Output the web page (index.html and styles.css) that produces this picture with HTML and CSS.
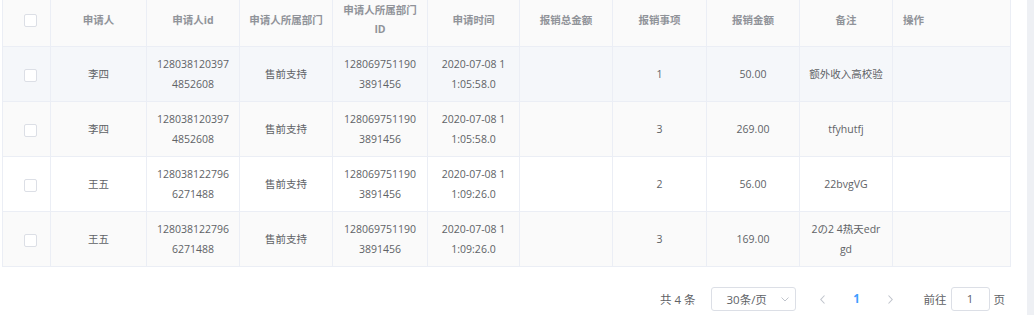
FILE: index.html
```html
<!DOCTYPE html>
<html lang="zh-CN">
<head>
<meta charset="utf-8">
<title>报销列表</title>
<link rel="stylesheet" href="styles.css">
</head>
<body>
<div class="page">
  <div class="main">
    <table class="grid">
      <colgroup>
        <col class="c-sel"><col class="c-96"><col class="c-93"><col class="c-93"><col class="c-95"><col class="c-92"><col class="c-93"><col class="c-94"><col class="c-93"><col class="c-93"><col class="c-op">
      </colgroup>
      <thead>
        <tr>
          <th class="sel"><span class="checkbox"></span></th>
          <th>申请人</th>
          <th>申请人id</th>
          <th>申请人所属部门</th>
          <th>申请人所属部门<br>ID</th>
          <th>申请时间</th>
          <th>报销总金额</th>
          <th>报销事项</th>
          <th>报销金额</th>
          <th>备注</th>
          <th class="left">操作</th>
        </tr>
      </thead>
      <tbody>
        <tr class="hover">
          <td class="sel"><span class="checkbox"></span></td>
          <td>李四</td>
          <td>128038120397<br>4852608</td>
          <td>售前支持</td>
          <td>128069751190<br>3891456</td>
          <td>2020-07-08 1<br>1:05:58.0</td>
          <td></td>
          <td>1</td>
          <td>50.00</td>
          <td>额外收入高校验</td>
          <td></td>
        </tr>
        <tr class="stripe">
          <td class="sel"><span class="checkbox"></span></td>
          <td>李四</td>
          <td>128038120397<br>4852608</td>
          <td>售前支持</td>
          <td>128069751190<br>3891456</td>
          <td>2020-07-08 1<br>1:05:58.0</td>
          <td></td>
          <td>3</td>
          <td>269.00</td>
          <td>tfyhutfj</td>
          <td></td>
        </tr>
        <tr>
          <td class="sel"><span class="checkbox"></span></td>
          <td>王五</td>
          <td>128038122796<br>6271488</td>
          <td>售前支持</td>
          <td>128069751190<br>3891456</td>
          <td>2020-07-08 1<br>1:09:26.0</td>
          <td></td>
          <td>2</td>
          <td>56.00</td>
          <td>22bvgVG</td>
          <td></td>
        </tr>
        <tr class="stripe">
          <td class="sel"><span class="checkbox"></span></td>
          <td>王五</td>
          <td>128038122796<br>6271488</td>
          <td>售前支持</td>
          <td>128069751190<br>3891456</td>
          <td>2020-07-08 1<br>1:09:26.0</td>
          <td></td>
          <td>3</td>
          <td>169.00</td>
          <td>2の2 4热天edr<br>gd</td>
          <td></td>
        </tr>
      </tbody>
    </table>

    <div class="pagination">
      <span class="total">共 4 条</span>
      <div class="sizes">
        <span class="sizes-text">30条/页</span>
        <svg class="sizes-arrow" width="8" height="5" viewBox="0 0 8 5"><path d="M0.5 0.5 L4 4 L7.5 0.5" fill="none" stroke="#c0c4cc" stroke-width="1"/></svg>
      </div>
      <button class="btn" type="button" aria-label="上一页">
        <svg width="5" height="9" viewBox="0 0 5 9"><path d="M4.5 0.5 L0.8 4.5 L4.5 8.5" fill="none" stroke="#c0c4cc" stroke-width="1.1"/></svg>
      </button>
      <span class="pager">1</span>
      <button class="btn" type="button" aria-label="下一页">
        <svg width="5" height="9" viewBox="0 0 5 9"><path d="M0.5 0.5 L4.2 4.5 L0.5 8.5" fill="none" stroke="#c0c4cc" stroke-width="1.1"/></svg>
      </button>
      <span class="jump">前往<span class="jump-input">1</span>页</span>
    </div>
  </div>
  <div class="strip"></div>
</div>
</body>
</html>
```

FILE: styles.css
```css
html, body {
  margin: 0;
  padding: 0;
  background: #ffffff;
}

body {
  font-family: "Open Sans", "Noto Sans CJK SC", sans-serif;
  color: #606266;
}

.page {
  display: flex;
  width: 1034px;
  height: 315px;
  overflow: hidden;
}

.main {
  width: 1027px;
  padding-left: 2px;
  box-sizing: border-box;
}

.strip {
  width: 7px;
  background: #eef0f4;
}

.grid {
  width: 1008px;
  table-layout: fixed;
  border-collapse: collapse;
  border-left: 1px solid #ebeef5;
  border-right: 1px solid #ebeef5;
  font-size: 10.5px;
}

.c-sel { width: 48px; }
.c-96 { width: 96px; }
.c-93 { width: 93px; }
.c-95 { width: 95px; }
.c-92 { width: 92px; }
.c-94 { width: 94px; }
.c-op { width: 118px; }

.grid th,
.grid td {
  border: 1px solid #ebeef5;
  border-top: none;
  padding: 0 6px;
  text-align: center;
  vertical-align: middle;
}

.grid th {
  height: 40px;
  padding-bottom: 6px;
  background: #fafafa;
  color: #909399;
  font-weight: 700;
  line-height: 19px;
}

.grid td {
  height: 54px;
  line-height: 20px;
  color: #606266;
}

.grid th.left {
  text-align: left;
  padding-left: 10px;
}

.grid .sel {
  text-align: left;
  padding-left: 21px;
}

.grid th.sel {
  padding-top: 0;
}

.grid tr.hover td {
  background: #f5f7fa;
}

.grid tr.stripe td {
  background: #fafafa;
}

.checkbox {
  display: inline-block;
  width: 13px;
  height: 13px;
  box-sizing: border-box;
  border: 1px solid #dcdfe6;
  border-radius: 2px;
  background: #ffffff;
  vertical-align: middle;
}

.pagination {
  display: flex;
  justify-content: flex-end;
  align-items: center;
  margin-top: 20px;
  padding-right: 22px;
  height: 24px;
  font-size: 11.5px;
  color: #606266;
}

.total {
  margin-right: 15px;
}

.sizes {
  display: flex;
  align-items: center;
  justify-content: space-between;
  width: 85px;
  height: 24px;
  box-sizing: border-box;
  border: 1px solid #dcdfe6;
  border-radius: 3px;
  padding: 0 6px 0 15px;
}

.sizes-text {
  color: #606266;
}

.btn {
  width: 30px;
  height: 24px;
  border: none;
  background: transparent;
  padding: 0;
  display: flex;
  align-items: center;
  justify-content: center;
}

.sizes + .btn {
  margin-left: 12px;
}

.pager {
  width: 30px;
  margin: 0 4px;
  text-align: center;
  color: #409eff;
  font-weight: 700;
  line-height: 24px;
}

.jump {
  display: flex;
  align-items: center;
  margin-left: 18px;
}

.jump-input {
  width: 39px;
  height: 24px;
  box-sizing: border-box;
  border: 1px solid #dcdfe6;
  border-radius: 3px;
  margin: 0 4px;
  text-align: center;
  line-height: 22px;
  color: #606266;
}
```
